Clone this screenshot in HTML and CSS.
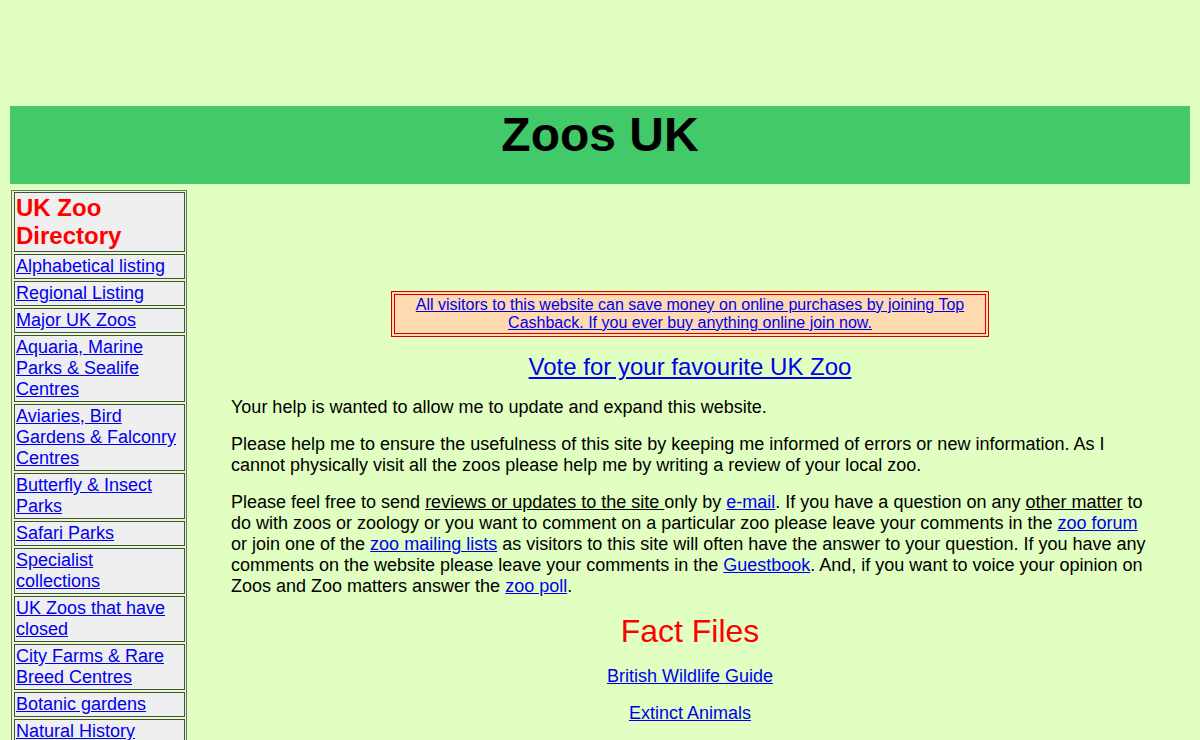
FILE: index.html
```html
<!DOCTYPE html>
<html>
<head>
    <meta charset="utf-8">
    <title>Zoos UK</title>
    <link rel="stylesheet" href="styles.css">
</head>
<body>
<div class="top_banner"></div>
<div class="main_title"><h1>Zoos UK</h1></div>

<div class="page">
    <ul class="side_menu">
        <li class="menu_head">UK Zoo Directory</li>
        <li><a href="#">Alphabetical listing</a></li>
        <li><a href="#">Regional Listing</a></li>
        <li><a href="#">Major UK Zoos</a></li>
        <li><a href="#">Aquaria, Marine Parks &amp; Sealife Centres</a></li>
        <li><a href="#">Aviaries, Bird Gardens &amp; Falconry Centres</a></li>
        <li><a href="#">Butterfly &amp; Insect Parks</a></li>
        <li><a href="#">Safari Parks</a></li>
        <li><a href="#">Specialist collections</a></li>
        <li><a href="#">UK Zoos that have closed</a></li>
        <li><a href="#">City Farms &amp; Rare Breed Centres</a></li>
        <li><a href="#">Botanic gardens</a></li>
        <li><a href="#">Natural History Museums</a></li>
        <li><a href="#">Zoo Societies</a></li>
    </ul>

    <div class="content">
        <div class="ad_space"></div>

        <div class="cashback">
            <div class="cashback_inner">
                <a href="#">All visitors to this website can save money on online purchases by joining Top Cashback. If you ever buy anything online join now.</a>
            </div>
        </div>

        <p class="vote"><a href="#">Vote for your favourite UK Zoo</a></p>

        <p>Your help is wanted to allow me to update and expand this website.</p>

        <p>Please help me to ensure the usefulness of this site by keeping me informed of errors or new information. As I cannot physically visit all the zoos please help me by writing a review of your local zoo.</p>

        <p>Please feel free to send <u>reviews or updates to the site </u>only by <a href="#">e-mail</a>. If you have a question on any <u>other matter</u> to do with zoos or zoology or you want to comment on a particular zoo please leave your comments in the <a href="#">zoo forum</a> or join one of the <a href="#">zoo mailing lists</a> as visitors to this site will often have the answer to your question. If you have any comments on the website please leave your comments in the <a href="#">Guestbook</a>. And, if you want to voice your opinion on Zoos and Zoo matters answer the <a href="#">zoo poll</a>.</p>

        <h2 class="fact_title">Fact Files</h2>
        <p class="centre"><a href="#">British Wildlife Guide</a></p>
        <p class="centre"><a href="#">Extinct Animals</a></p>
        <p class="centre"><a href="#">Endangered Species</a></p>
    </div>
</div>
</body>
</html>
```

FILE: styles.css
```css
body {
    font-family: "Liberation Sans", Arial, sans-serif;
    font-size: 18px;
    color: #000000;
    margin: 10px;
    background-color: #e0ffc0;
}

a {
    color: #0000ee;
}

.top_banner {
    height: 96px;
}

div.main_title {
    background-color: #42c969;
    padding: 1px 0 22px;
    text-align: center;
}

.main_title h1 {
    margin: 0;
    font-size: 48px;
    font-weight: bold;
}

.page {
    display: flex;
    align-items: flex-start;
    margin-top: 6px;
}

.side_menu {
    list-style: none;
    margin: 0 0 0 1px;
    padding: 1px 1px 1px 2px;
    width: 176px;
    box-sizing: border-box;
    flex: none;
    border: 1px solid #707070;
    display: flex;
    flex-direction: column;
    gap: 2px;
}

.side_menu li {
    background-color: #efefef;
    border: 1px solid #4a4a4a;
    padding: 1px 6px 1px 1px;
}

.side_menu li.menu_head {
    color: #ff0000;
    font-weight: bold;
    font-size: 24px;
}

.content {
    flex: 1;
    padding: 0 41px 0 44px;
}

.ad_space {
    height: 101px;
}

.cashback {
    width: 598px;
    box-sizing: border-box;
    margin: 0 auto;
    border: 1px solid #d40000;
    padding: 2px;
    background-color: #ffd9b0;
}

.cashback_inner {
    border: 1px solid #d40000;
    padding: 1px 18px;
    text-align: center;
    font-size: 16px;
    line-height: 18px;
}

p {
    margin: 16px 0;
}

.vote {
    text-align: center;
    font-size: 24px;
}

.fact_title {
    text-align: center;
    color: #ff0000;
    font-size: 32px;
    font-weight: normal;
    margin: 16px 0;
}

.centre {
    text-align: center;
}
```
